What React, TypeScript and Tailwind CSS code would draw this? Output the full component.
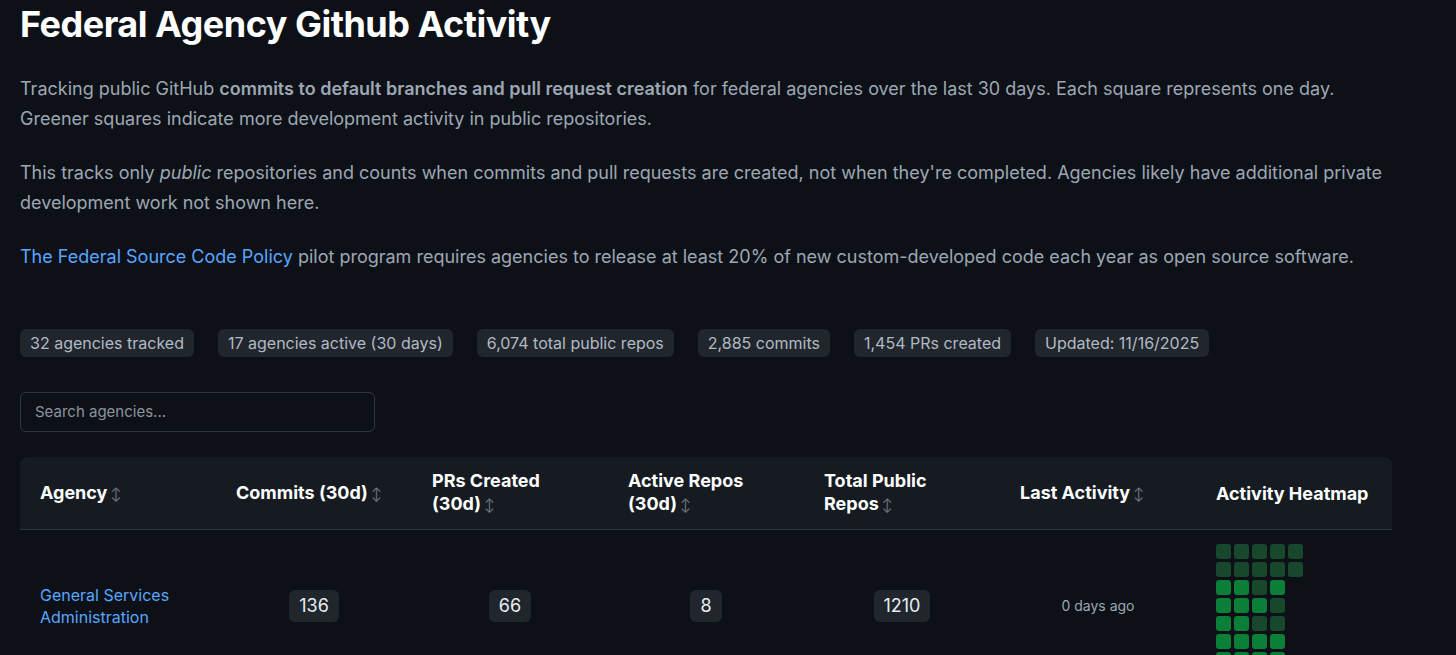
import React from "react";

const pills = [
  "32 agencies tracked",
  "17 agencies active (30 days)",
  "6,074 total public repos",
  "2,885 commits",
  "1,454 PRs created",
  "Updated: 11/16/2025",
];

const heat = [
  "ddddd",
  "ddddd",
  "bbdb",
  "bbbd",
  "bbdd",
  "bbbb",
  "bbbb",
];

function Sort() {
  return <span className="ml-[3px] text-[13px] font-normal text-[#6e7681]">↕</span>;
}

function Badge({ children }: { children: React.ReactNode }) {
  return (
    <span className="inline-flex h-[32px] items-center rounded-md bg-[#21262d] px-[10px] text-[18px] text-[#e6edf3]">
      {children}
    </span>
  );
}

export default function App() {
  return (
    <div
      className="min-h-screen bg-[#0d1117] px-5 text-[#9da7b3]"
      style={{ fontFamily: "Inter, 'Noto Sans', sans-serif" }}
    >
      <h1 className="pt-[2px] text-[36px] font-bold leading-[44px] tracking-[-0.5px] text-white">
        Federal Agency Github Activity
      </h1>
      <div className="mt-[28px] max-w-[1380px] text-[18px] leading-[30px]">
        <p>
          Tracking public GitHub <strong className="font-semibold">commits to default branches and pull request creation</strong> for federal agencies over the last 30 days. Each square represents one day. Greener squares indicate more development activity in public repositories.
        </p>
        <p className="mt-6">
          This tracks only <em>public</em> repositories and counts when commits and pull requests are created, not when they're completed. Agencies likely have additional private development work not shown here.
        </p>
        <p className="mt-6">
          <a className="text-[#58a6ff]">The Federal Source Code Policy</a> pilot program requires agencies to release at least 20% of new custom-developed code each year as open source software.
        </p>
      </div>
      <div className="mt-[57px] flex gap-6">
        {pills.map((p) => (
          <span key={p} className="rounded-md bg-[#21262d] px-[10px] py-[3px] text-[16px] leading-[22px] text-[#b1bac4]">
            {p}
          </span>
        ))}
      </div>
      <div className="mt-[35px] flex h-[40px] w-[355px] items-center rounded-md border border-[#30363d] px-[14px] text-[15px] text-[#8b949e]">
        Search agencies...
      </div>
      <div className="mt-[25px] w-[1372px]">
        <div className="grid h-[73px] grid-cols-7 items-center rounded-t-lg border-b border-[#30363d] bg-[#161b22] text-[18px] font-bold leading-[23px] text-white">
          <div className="px-5">Agency<Sort /></div>
          <div className="px-5">Commits (30d)<Sort /></div>
          <div className="px-5">PRs Created<br />(30d)<Sort /></div>
          <div className="px-5">Active Repos<br />(30d)<Sort /></div>
          <div className="px-5">Total Public<br />Repos<Sort /></div>
          <div className="px-5">Last Activity<Sort /></div>
          <div className="px-5">Activity Heatmap</div>
        </div>
        <div className="grid grid-cols-7 items-center">
          <div className="px-5 text-[16px] leading-[22px] text-[#58a6ff]">General Services<br />Administration</div>
          <div className="flex justify-center"><Badge>136</Badge></div>
          <div className="flex justify-center"><Badge>66</Badge></div>
          <div className="flex justify-center"><Badge>8</Badge></div>
          <div className="flex justify-center"><Badge>1210</Badge></div>
          <div className="text-center text-[14px] text-[#9da7b3]">0 days ago</div>
          <div className="flex flex-col gap-[3px] px-5 pt-[14px] pb-[14px]">
            {heat.map((row, i) => (
              <div key={i} className="flex gap-[3px]">
                {row.split("").map((c, j) => (
                  <div
                    key={j}
                    className={
                      c === "b"
                        ? "h-[15px] w-[15px] rounded-[3px] bg-[#0b7f37]"
                        : "h-[15px] w-[15px] rounded-[3px] bg-[#17482c]"
                    }
                  />
                ))}
              </div>
            ))}
          </div>
        </div>
      </div>
    </div>
  );
}
